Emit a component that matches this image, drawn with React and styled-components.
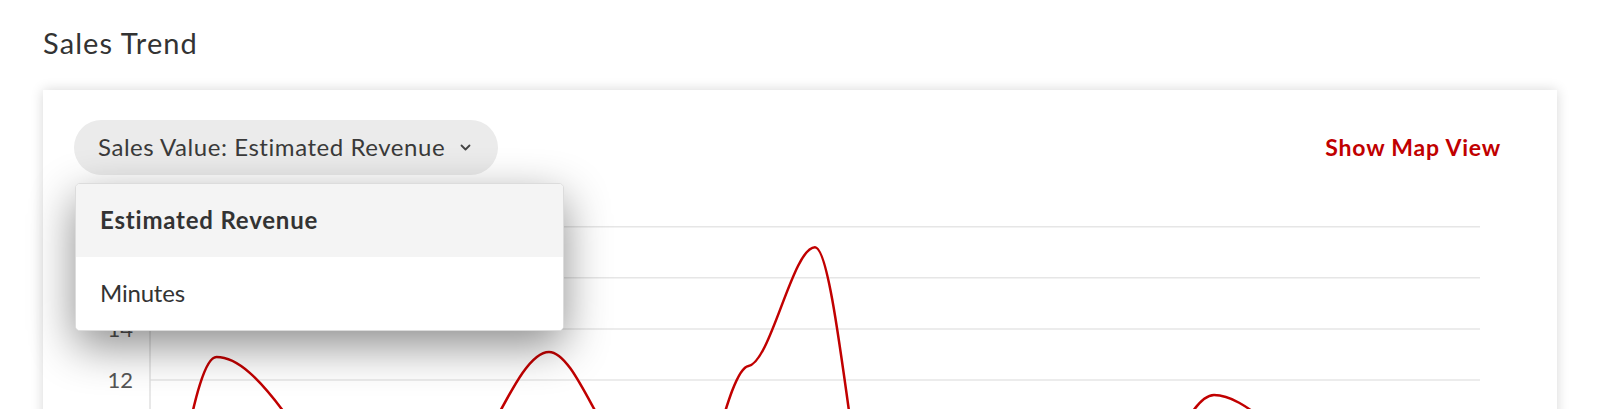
import React from "react";
import styled, { createGlobalStyle } from "styled-components";

const GlobalStyle = createGlobalStyle`
  *, *::before, *::after { box-sizing: border-box; }
  html, body { margin: 0; padding: 0; overflow: hidden; background: #fff; }
  body { font-family: Lato, "Noto Sans", sans-serif; color: #333; }
`;

const Page = styled.div`
  padding: 25px 43px 0;
`;

const Title = styled.h2`
  margin: 0 0 30px;
  font-size: 29px;
  line-height: 35px;
  font-weight: 400;
  letter-spacing: 1.1px;
  color: #333;
`;

const Card = styled.section`
  position: relative;
  background: #fff;
  box-shadow: 0 0 12px rgba(0, 0, 0, 0.16);
  padding: 30px 31px 40px;
`;

const Header = styled.div`
  display: flex;
  align-items: center;
  justify-content: space-between;
  height: 55px;
  padding-right: 25px;
`;

const SelectWrap = styled.div`
  position: relative;
`;

const Pill = styled.button`
  display: inline-flex;
  align-items: center;
  gap: 15px;
  height: 55px;
  padding: 0 27px 0 24px;
  border: none;
  border-radius: 28px;
  background: #ebebeb;
  font-family: inherit;
  font-size: 24px;
  line-height: 1.2;
  letter-spacing: 0.55px;
  color: #3a3a3a;
  cursor: pointer;
`;

const Menu = styled.ul`
  position: absolute;
  top: 63px;
  left: 1px;
  width: 489px;
  margin: 0;
  padding: 0;
  list-style: none;
  background: #fff;
  border: 1px solid #dcdcdc;
  border-radius: 5px;
  box-shadow: 0 15px 45px rgba(0, 0, 0, 0.45);
  overflow: hidden;
  z-index: 5;
`;

const Item = styled.li`
  height: 73px;
  display: flex;
  align-items: center;
  padding-left: 24px;
  font-size: 24px;
  line-height: 1.2;
  font-weight: ${(p) => (p.$active ? 700 : 400)};
  letter-spacing: ${(p) => (p.$active ? "0.8px" : "-0.2px")};
  background: ${(p) => (p.$active ? "#f4f4f4" : "#fff")};
  color: #333;
`;

const MapLink = styled.a`
  font-size: 23px;
  line-height: 1.2;
  font-weight: 700;
  letter-spacing: 0.8px;
  color: #c10000;
  text-decoration: none;
  cursor: pointer;
`;

const ChartSvg = styled.svg`
  display: block;
  width: 1452px;
  height: 520px;
`;

const AxisLabel = styled.text`
  font-family: Lato, "Noto Sans", sans-serif;
  font-size: 22px;
  fill: #555;
`;

const vals = [0.3, 12.9, 10.8, 6, 4, 9.5, 13.1, 9.5, 6.5, 12.55, 17.2, 4.2, 3, 4, 6, 8, 11.41, 10, 8, 7, 6];
const slopeOverrides = { 9: 0.4 };
const X0 = 76;
const DX = 66.5;
const X1 = X0 + DX * 20;
const PX_PER_UNIT = 25.55;
const yOf = (v) => 205 - (v - 12) * PX_PER_UNIT;

function monotonePath(pts, overrides) {
  const n = pts.length;
  const sign = (x) => (x < 0 ? -1 : 1);
  const m = new Array(n).fill(0);
  for (let i = 1; i < n - 1; i++) {
    const h0 = pts[i][0] - pts[i - 1][0];
    const h1 = pts[i + 1][0] - pts[i][0];
    const s0 = (pts[i][1] - pts[i - 1][1]) / h0;
    const s1 = (pts[i + 1][1] - pts[i][1]) / h1;
    const p = (s0 * h1 + s1 * h0) / (h0 + h1);
    m[i] = (sign(s0) + sign(s1)) * Math.min(Math.abs(s0), Math.abs(s1), 0.5 * Math.abs(p)) || 0;
  }
  Object.keys(overrides).forEach((k) => {
    m[Number(k)] = (-overrides[k] * PX_PER_UNIT) / DX;
  });
  const sFirst = (pts[1][1] - pts[0][1]) / (pts[1][0] - pts[0][0]);
  m[0] = (3 * sFirst - m[1]) / 2;
  const sLast = (pts[n - 1][1] - pts[n - 2][1]) / (pts[n - 1][0] - pts[n - 2][0]);
  m[n - 1] = (3 * sLast - m[n - 2]) / 2;
  let d = `M${pts[0][0]},${pts[0][1]}`;
  for (let i = 0; i < n - 1; i++) {
    const [x0, y0] = pts[i];
    const [x1, y1] = pts[i + 1];
    const dx = (x1 - x0) / 3;
    d += `C${x0 + dx},${y0 + dx * m[i]},${x1 - dx},${y1 - dx * m[i + 1]},${x1},${y1}`;
  }
  return d;
}

const points = vals.map((v, i) => [X0 + DX * i, yOf(v)]);
const linePath = monotonePath(points, slopeOverrides);
const ticks = [18, 16, 14, 12, 10, 8, 6, 4, 2, 0];

function Chevron() {
  return (
    <svg width="11" height="7" viewBox="0 0 11 7" aria-hidden="true">
      <polyline points="1.5,1.5 5.5,5.5 9.5,1.5" fill="none" stroke="#444" strokeWidth="1.8" strokeLinecap="round" strokeLinejoin="round" />
    </svg>
  );
}

function TrendChart() {
  return (
    <ChartSvg viewBox="0 0 1452 520">
      {ticks.map((t) => (
        <g key={t}>
          <line x1={X0} x2={X1} y1={yOf(t)} y2={yOf(t)} stroke="#e6e6e6" strokeWidth="1.5" />
          <AxisLabel x={59} y={yOf(t) + 8} textAnchor="end">
            {t}
          </AxisLabel>
        </g>
      ))}
      <line x1={X0} x2={X0} y1={yOf(18)} y2={yOf(0)} stroke="#e0e0e0" strokeWidth="1.5" />
      <path d={linePath} fill="none" stroke="#c10000" strokeWidth="2.5" strokeLinejoin="round" />
    </ChartSvg>
  );
}

export default function App() {
  return (
    <>
      <GlobalStyle />
      <Page>
        <Title>Sales Trend</Title>
        <Card>
          <Header>
            <SelectWrap>
              <Pill type="button">
                <span>Sales Value: Estimated Revenue</span>
                <Chevron />
              </Pill>
              <Menu>
                <Item $active>Estimated Revenue</Item>
                <Item>Minutes</Item>
              </Menu>
            </SelectWrap>
            <MapLink>Show Map View</MapLink>
          </Header>
          <TrendChart />
        </Card>
      </Page>
    </>
  );
}
